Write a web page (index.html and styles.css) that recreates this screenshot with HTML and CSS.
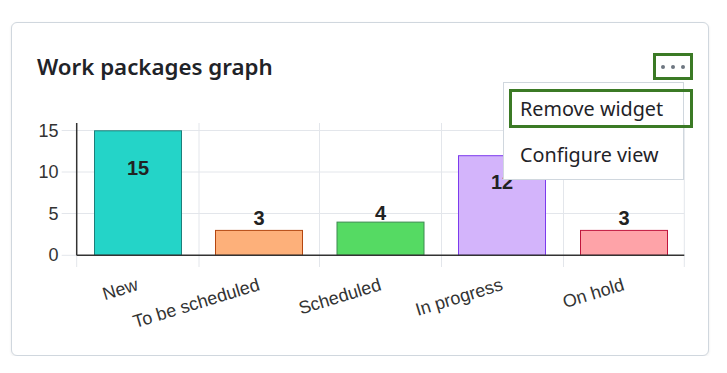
FILE: index.html
```html
<!DOCTYPE html>
<html>
  <head>
    <title>Work packages graph</title>
    <link rel="stylesheet" href="styles.css">
  </head>
  <body>
    <!-- Widget card -->
    <div class="widget">
      <div class="widget-header">
        <h2 class="widget-title">Work packages graph</h2>
        <button class="widget-menu-button" aria-label="Widget menu">
          <span class="dot"></span><span class="dot"></span><span class="dot"></span>
        </button>
      </div>

      <!-- Chart -->
      <svg class="chart" width="696" height="245" viewBox="0 0 696 245">
        <g class="grid">
          <line x1="49.7" y1="20.5" x2="672.3" y2="20.5"/>
          <line x1="49.7" y1="62" x2="672.3" y2="62"/>
          <line x1="49.7" y1="103.5" x2="672.3" y2="103.5"/>
          <line x1="187" y1="13" x2="187" y2="157"/>
          <line x1="307.5" y1="13" x2="307.5" y2="157"/>
          <line x1="429.5" y1="13" x2="429.5" y2="157"/>
          <line x1="551.5" y1="13" x2="551.5" y2="157"/>
          <line x1="672.3" y1="13" x2="672.3" y2="157"/>
          <line x1="49.7" y1="145.3" x2="64.7" y2="145.3"/>
          <line x1="64.7" y1="145.3" x2="64.7" y2="157"/>
        </g>
        <g class="y-labels">
          <text x="46.5" y="20.5">15</text>
          <text x="46.5" y="62">10</text>
          <text x="46.5" y="103.5">5</text>
          <text x="46.5" y="145">0</text>
        </g>
        <g class="bars">
          <rect class="bar-new" x="82.5" y="20.8" width="87" height="124.5"/>
          <rect class="bar-tbs" x="203.5" y="120.4" width="87" height="24.9"/>
          <rect class="bar-sched" x="325" y="112.1" width="87" height="33.2"/>
          <rect class="bar-progress" x="446.5" y="45.7" width="87" height="99.6"/>
          <rect class="bar-hold" x="568.5" y="120.4" width="87" height="24.9"/>
        </g>
        <g class="axis">
          <line x1="64.7" y1="13" x2="64.7" y2="145.3"/>
          <line x1="64.7" y1="145.3" x2="672.3" y2="145.3"/>
        </g>
        <g class="values">
          <text x="126" y="65">15</text>
          <text x="247" y="115">3</text>
          <text x="368.5" y="110">4</text>
          <text x="490" y="79">12</text>
          <text x="612" y="115">3</text>
        </g>
        <g class="x-labels">
          <text transform="translate(125.5 174) rotate(-17)">New</text>
          <text transform="translate(247 174) rotate(-17)">To be scheduled</text>
          <text transform="translate(368.5 174) rotate(-17)">Scheduled</text>
          <text transform="translate(490 174) rotate(-17)">In progress</text>
          <text transform="translate(611.5 174) rotate(-17)">On hold</text>
        </g>
      </svg>

      <!-- Drop-down menu -->
      <div class="dropdown-menu">
        <a href="#" class="dropdown-item focused">Remove widget</a>
        <a href="#" class="dropdown-item">Configure view</a>
      </div>
    </div>
  </body>
</html>
```

FILE: styles.css
```css
body {
  margin: 0;
  background-color: white;
  font-family: "Noto Sans", "Open Sans", sans-serif;
  color: #1f2328;
}

.widget {
  position: relative;
  box-sizing: border-box;
  width: 698px;
  height: 334px;
  margin: 22px 0 0 11px;
  border: 1px solid #d0d7de;
  border-radius: 6px;
  box-shadow: 0 1px 3px rgba(0, 0, 0, 0.08);
  background-color: white;
}

.widget-header {
  display: flex;
  justify-content: space-between;
  align-items: flex-start;
  height: 87px;
  box-sizing: border-box;
  padding: 30px 15px 0 25px;
}

.widget-title {
  margin: 0;
  font-size: 22.3px;
  font-weight: 600;
  line-height: 28px;
  color: #1f2328;
}

.widget-menu-button {
  display: flex;
  justify-content: center;
  align-items: center;
  gap: 6px;
  box-sizing: border-box;
  width: 40px;
  height: 27px;
  padding: 0;
  border: 3px solid #3b7a25;
  background: white;
}

.dot {
  width: 4px;
  height: 4px;
  border-radius: 50%;
  background-color: #6e7781;
}

/* Chart styles */
.chart {
  display: block;
}

.grid line {
  stroke: #e3e6eb;
  stroke-width: 1;
}

.axis line {
  stroke: #333;
  stroke-width: 1.5;
}

.y-labels text {
  font-family: "Liberation Sans", Arial, sans-serif;
  font-size: 18px;
  fill: #333;
  text-anchor: end;
  dominant-baseline: central;
}

.values text {
  font-family: "Liberation Sans", Arial, sans-serif;
  font-size: 20px;
  font-weight: bold;
  fill: #222;
  text-anchor: middle;
}

.x-labels text {
  font-family: "Liberation Sans", Arial, sans-serif;
  font-size: 18px;
  fill: #333;
  text-anchor: end;
  dominant-baseline: central;
}

.bars rect {
  stroke-width: 1;
}

.bar-new { fill: #24d4c8; stroke: #1c7f7a; }
.bar-tbs { fill: #fdb07a; stroke: #b4460f; }
.bar-sched { fill: #55da63; stroke: #3d8a50; }
.bar-progress { fill: #d3b4fb; stroke: #7c3aed; }
.bar-hold { fill: #fea3a8; stroke: #c0143c; }

/* Drop-down menu */
.dropdown-menu {
  position: absolute;
  left: 491px;
  top: 59px;
  width: 181px;
  box-sizing: border-box;
  padding: 6px 0 4px;
  border: 1px solid #d0d7de;
  background-color: white;
}

.dropdown-item {
  display: flex;
  align-items: center;
  height: 42px;
  padding-left: 16px;
  font-size: 19.8px;
  color: #1f2328;
  text-decoration: none;
  margin-top: 5px;
}

.dropdown-item.focused {
  box-sizing: border-box;
  height: 39px;
  margin: 0 -10px 0 5px;
  padding-left: 8px;
  border: 3px solid #3b7a25;
}
```
